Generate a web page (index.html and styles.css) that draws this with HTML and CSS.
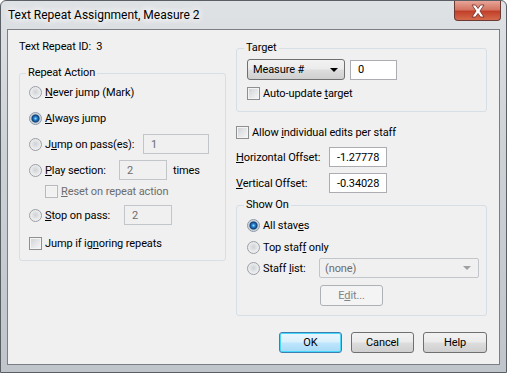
FILE: index.html
```html
<!DOCTYPE html>
<html lang="en">
<head>
    <meta charset="UTF-8">
    <title>Text Repeat Assignment, Measure 2</title>
    <link rel="stylesheet" href="styles.css">
</head>
<body>
    <div class="window">
        <div class="titlebar">
            <div class="title">Text Repeat Assignment, Measure 2</div>
            <div class="close-btn">
                <svg width="16" height="14" viewBox="0 0 16 14">
                    <path d="M2 1 L5.5 1 L8 4.5 L10.5 1 L14 1 L10 7 L14 13 L10.5 13 L8 9.5 L5.5 13 L2 13 L6 7 Z" fill="#fff" stroke="#6e2a24" stroke-width="0.8"/>
                </svg>
            </div>
        </div>

        <div class="client">
            <!-- left column -->
            <div class="col">
                <div class="id-row">Text Repeat ID:&nbsp; 3</div>

                <fieldset class="group repeat-group">
                    <legend>Repeat Action</legend>

                    <div class="row r1">
                        <span class="radio"></span>
                        <span><u>N</u>ever jump (Mark)</span>
                    </div>
                    <div class="row r2">
                        <span class="radio on"></span>
                        <span><u>A</u>lways jump</span>
                    </div>
                    <div class="row r3">
                        <span class="radio"></span>
                        <span class="lbl w-pass">J<u>u</u>mp on pass(es):</span>
                        <span class="field disabled w-66">1</span>
                    </div>
                    <div class="row r4">
                        <span class="radio"></span>
                        <span class="lbl w-play"><u>P</u>lay section:</span>
                        <span class="field disabled w-48">2</span>
                        <span class="times">times</span>
                    </div>
                    <div class="row r5 sub">
                        <span class="check disabled"></span>
                        <span class="grey"><u>R</u>eset on repeat action</span>
                    </div>
                    <div class="row r6">
                        <span class="radio"></span>
                        <span class="lbl w-stop"><u>S</u>top on pass:</span>
                        <span class="field disabled w-48">2</span>
                    </div>
                    <div class="row r7">
                        <span class="check"></span>
                        <span>Jump if ig<u>n</u>oring repeats</span>
                    </div>
                </fieldset>
            </div>

            <!-- right column -->
            <div class="col">
                <fieldset class="group target-group">
                    <legend>Target</legend>
                    <div class="row t1">
                        <div class="combo">
                            <span>Measure #</span>
                            <span class="arrow"></span>
                        </div>
                        <span class="field w-47">0</span>
                    </div>
                    <div class="row t2">
                        <span class="check"></span>
                        <span>Auto-update <u>t</u>arget</span>
                    </div>
                </fieldset>

                <div class="row allow-row">
                    <span class="check"></span>
                    <span>Allow <u>i</u>ndividual edits per staff</span>
                </div>
                <div class="row offset-row h-off">
                    <span class="off-lbl"><u>H</u>orizontal Offset:</span>
                    <span class="field w-58">-1.27778</span>
                </div>
                <div class="row offset-row v-off">
                    <span class="off-lbl"><u>V</u>ertical Offset:</span>
                    <span class="field w-58">-0.34028</span>
                </div>

                <fieldset class="group show-group">
                    <legend>Show On</legend>
                    <div class="row s1">
                        <span class="radio on"></span>
                        <span>All stav<u>e</u>s</span>
                    </div>
                    <div class="row s2">
                        <span class="radio"></span>
                        <span>Top staf<u>f</u> only</span>
                    </div>
                    <div class="row s3">
                        <span class="radio"></span>
                        <span class="lbl w-list">Staff <u>l</u>ist:</span>
                        <div class="combo disabled-combo">
                            <span>(none)</span>
                            <span class="arrow"></span>
                        </div>
                    </div>
                    <div class="row s4">
                        <span class="btn disabled-btn">E<u>d</u>it...</span>
                    </div>
                </fieldset>
            </div>

            <div class="buttons">
                <span class="btn default-btn">OK</span>
                <span class="btn">Cancel</span>
                <span class="btn">Help</span>
            </div>
        </div>
    </div>
</body>
</html>
```

FILE: styles.css
```css
* {
    margin: 0;
    padding: 0;
    box-sizing: border-box;
}

body {
    width: 507px;
    height: 373px;
    background: #fff;
    font-family: Roboto, 'Noto Sans', sans-serif;
    font-size: 11px;
    letter-spacing: -0.1px;
    color: #000;
}

.window {
    width: 507px;
    height: 373px;
    display: flex;
    flex-direction: column;
    border: 1px solid #5a5f66;
    border-radius: 6px 6px 0 0;
    background: linear-gradient(180deg, #dfe2e5 0%, #cdd2d7 40%, #bfc5cb 100%);
}

.titlebar {
    height: 28px;
    display: flex;
    justify-content: space-between;
    align-items: flex-start;
}

.title {
    padding: 6px 0 0 7px;
    font-size: 12px;
    letter-spacing: 0;
    line-height: 16px;
    color: #000;
    text-shadow: 0 0 6px #fff, 0 0 8px #fff, 0 0 10px #fff;
}

.close-btn {
    width: 47px;
    height: 20px;
    margin-right: 5px;
    border: 1px solid #6b3a35;
    border-top: none;
    border-radius: 0 0 4px 4px;
    background: linear-gradient(180deg, #e7a597 0%, #d47563 45%, #c2402a 55%, #d46a4c 100%);
    display: flex;
    align-items: center;
    justify-content: center;
}

.client {
    flex: 1;
    margin: 0 6px 7px 6px;
    border: 1px solid #7b7f85;
    background: #f0f0f0;
    display: grid;
    grid-template-columns: 207px 251px;
    grid-template-rows: auto 1fr;
    column-gap: 10px;
    padding: 10px 11px 0 11px;
}

.col {
    display: flex;
    flex-direction: column;
}

.id-row {
    line-height: 14px;
}

/* group boxes */
.group {
    border: 1px solid #d5dfe5;
    border-radius: 3px;
    padding: 0 0 0 9px;
}

.group legend {
    margin-left: -3px;
    padding: 0 2px;
    line-height: 16px;
}

.repeat-group {
    margin-top: 11px;
    padding-bottom: 6px;
}

.target-group {
    padding-bottom: 10px;
    padding-left: 10px;
}

.show-group {
    margin-top: 4px;
    padding-bottom: 10px;
    padding-left: 10px;
}

/* rows */
.row {
    display: flex;
    align-items: center;
    white-space: nowrap;
}

.row .radio,
.row .check {
    margin-right: 3px;
}

.r1, .r2, .r3, .r4, .r6, .r7 {
    height: 22px;
}

.r2, .r3, .r4 { margin-top: 4px; }
.r5 { height: 16px; margin-top: 2px; }
.r6 { margin-top: 5px; }
.r7 { margin-top: 6px; }

.sub {
    padding-left: 16px;
}

.lbl {
    display: inline-block;
}

.w-pass { width: 98px; }
.w-play { width: 74px; }
.w-stop { width: 79px; }
.w-list { width: 55px; }

.times {
    margin-left: 6px;
}

.grey {
    color: #6d6d6d;
}

.t1 { margin-top: 3px; height: 21px; }
.t2 { margin-top: 5px; height: 16px; }

.allow-row {
    margin-top: 12px;
    height: 16px;
}

.offset-row {
    height: 20px;
}

.h-off { margin-top: 7px; }
.v-off { margin-top: 6px; }

.off-lbl {
    width: 93px;
}

.s1 { margin-top: 4px; height: 16px; }
.s2 { margin-top: 6px; height: 16px; }
.s3 { margin-top: 3px; height: 20px; }
.s4 { margin-top: 7px; height: 20px; padding-left: 73px; }

/* controls */
.radio {
    display: inline-block;
    width: 13px;
    height: 13px;
    flex: none;
    border-radius: 50%;
    border: 1px solid #9b9fa3;
    background: radial-gradient(circle at 50% 45%, #cfd2d5 0%, #e4e6e8 45%, #fbfbfb 100%);
}

.radio.on {
    border-color: #8a98a6;
    background: radial-gradient(circle at 50% 50%, #a8e0ff 0, #2b8ad4 1.5px, #0d3f78 3.5px, #bcc3ca 4.5px, #f2f4f6 6px);
}

.check {
    display: inline-block;
    width: 13px;
    height: 13px;
    flex: none;
    border: 1px solid #8e8f8f;
    background: linear-gradient(135deg, #cdd0d4 0%, #e6e7e9 55%, #f7f7f7 100%);
    box-shadow: inset 0 0 0 1px #f4f4f4;
}

.check.disabled {
    border-color: #b8b9ba;
    background: #f1f1f1;
}

.field {
    display: inline-flex;
    align-items: center;
    height: 20px;
    padding-left: 7px;
    background: #fff;
    border: 1px solid #abadb3;
    border-top-color: #abadb3;
    flex: none;
}

.field.disabled {
    background: #f0f0f0;
    border-color: #c2c5ca;
    color: #6d6d6d;
}

.w-66 { width: 66px; }
.w-48 { width: 48px; }
.w-47 { width: 47px; margin-left: 5px; }
.w-58 { width: 58px; }

.combo {
    width: 98px;
    height: 21px;
    display: flex;
    align-items: center;
    justify-content: space-between;
    padding: 0 6px 0 5px;
    border: 1px solid #707070;
    border-radius: 3px;
    background: linear-gradient(180deg, #f2f2f2 0%, #ebebeb 48%, #dddddd 52%, #cfcfcf 100%);
    flex: none;
}

.arrow {
    width: 0;
    height: 0;
    border-left: 4px solid transparent;
    border-right: 4px solid transparent;
    border-top: 4px solid #000;
}

.disabled-combo {
    width: 160px;
    height: 20px;
    margin-left: 1px;
    border-color: #c2c5ca;
    border-radius: 2px;
    background: #f0f0f0;
    color: #6d6d6d;
    padding-right: 7px;
}

.disabled-combo .arrow {
    border-top-color: #a0a0a0;
}

.btn {
    display: inline-flex;
    align-items: center;
    justify-content: center;
    width: 63px;
    height: 21px;
    border: 1px solid #707070;
    border-radius: 3px;
    background: linear-gradient(180deg, #f2f2f2 0%, #ebebeb 48%, #dddddd 52%, #cfcfcf 100%);
}

.disabled-btn {
    border-color: #adb2b5;
    background: #f4f4f4;
    color: #838383;
}

.default-btn {
    border-color: #3c7fb1;
    background: linear-gradient(180deg, #eaf6fd 0%, #d9f0fc 48%, #bee6fd 52%, #a7d9f5 100%);
    box-shadow: inset 0 0 0 1px #48d6fb;
}

.buttons {
    grid-column: 1 / 3;
    display: flex;
    justify-content: flex-end;
    gap: 9px;
    padding-top: 16px;
}

.buttons .btn:last-child {
    width: 64px;
}
```
